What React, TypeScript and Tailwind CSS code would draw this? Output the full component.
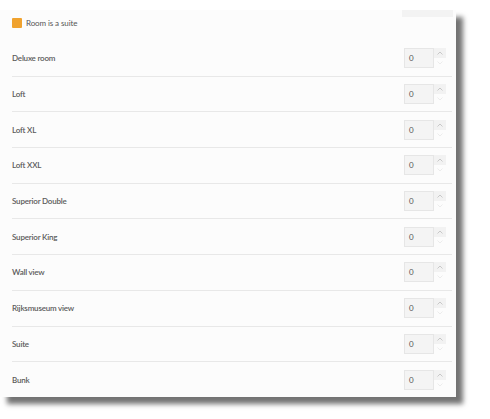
const ROOMS = [
  'Deluxe room',
  'Loft',
  'Loft XL',
  'Loft XXL',
  'Superior Double',
  'Superior King',
  'Wall view',
  'Rijksmuseum view',
  'Suite',
  'Bunk',
]

function Stepper() {
  return (
    <div className="flex items-stretch h-[20px]">
      <div className="w-[30px] h-full bg-[#f4f4f4] border border-[#e6e6e6] flex items-center pl-[4px] text-[8px] text-[#555]">
        0
      </div>
      <div className="w-[12px] h-full flex flex-col">
        <div className="h-1/2 bg-[#f2f2f2] flex items-center justify-center">
          <svg width="6" height="4" viewBox="0 0 6 4">
            <path d="M0.5 3.5 L3 1 L5.5 3.5" fill="none" stroke="#c8c8c8" strokeWidth="1" />
          </svg>
        </div>
        <div className="h-1/2 flex items-center justify-center">
          <svg width="6" height="4" viewBox="0 0 6 4">
            <path d="M0.5 0.5 L3 3 L5.5 0.5" fill="none" stroke="#ececec" strokeWidth="1" />
          </svg>
        </div>
      </div>
    </div>
  )
}

export default function App() {
  return (
    <div className="w-[490px] h-[419px] bg-white pt-[10px] font-['Lato',sans-serif]">
      <div className="w-[456px] h-[387px] bg-[#fcfcfc] shadow-[7px_7px_5px_0px_rgba(0,0,0,0.55)] flex flex-col">
        {/* suite toggle */}
        <div className="h-[30px] flex items-start">
          <div className="flex items-center gap-[4px] ml-[12px] mt-[7px]">
            <span className="w-[10px] h-[10px] rounded-[1px] bg-[#f0a22e]" />
            <span className="text-[8px] tracking-[-0.1px] text-[#555]">Room is a suite</span>
          </div>
          <div className="ml-auto mr-[3px] w-[51px] h-[7px] bg-[#f3f3f3]" />
        </div>

        {ROOMS.map((name, i) => (
          <div
            key={name}
            className={
              'h-[35.7px] mx-[12px] mr-[4px] flex items-center justify-between ' +
              (i > 0 ? 'border-t border-[#e8e8e8]' : '')
            }
          >
            <span className="text-[8px] tracking-[-0.2px] font-semibold text-[#5a5a5a]">{name}</span>
            <div className="mr-[6px]">
              <Stepper />
            </div>
          </div>
        ))}
      </div>
    </div>
  )
}
